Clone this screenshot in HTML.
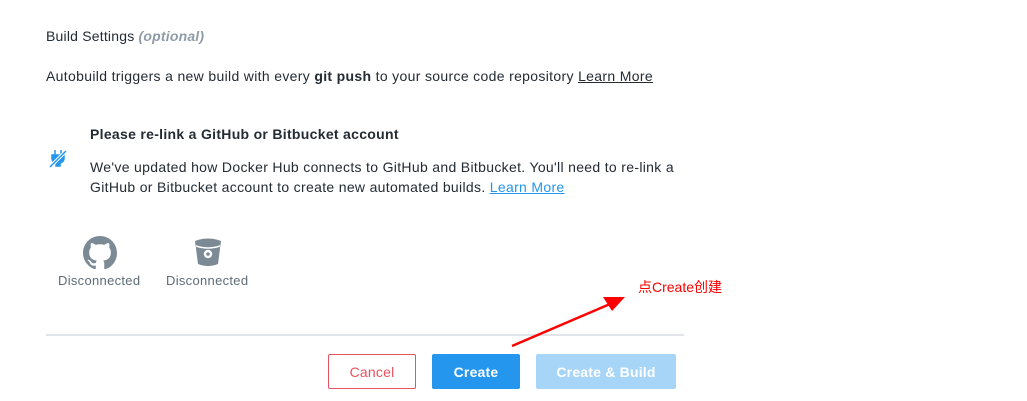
<!DOCTYPE html>
<html><head><meta charset="utf-8"><style>
body{margin:0;width:1027px;height:401px;background:#fff;font-family:"Liberation Sans","Noto Sans CJK SC",sans-serif;color:#232b33;position:relative;overflow:hidden}
.a{position:absolute;white-space:nowrap}
.t{font-size:14px}
u{text-decoration:underline}
.btn{position:absolute;top:354px;height:35px;box-sizing:border-box;font-size:14px;font-weight:bold;display:flex;align-items:center;justify-content:center;border-radius:2px;letter-spacing:0.2px}
</style></head><body>
<div class="a t" style="left:46px;top:28px;letter-spacing:0.2px">Build Settings <i style="color:#8f9ba6;font-weight:bold">(optional)</i></div>
<div class="a t" style="left:46px;top:68px;letter-spacing:0.33px">Autobuild triggers a new build with every <b>git push</b> to your source code repository <u>Learn More</u></div>
<svg class="a" style="left:49px;top:148px" width="20" height="20" viewBox="0 0 20 20"><path d="M6 2v5M12 2v5M3 7h12v4a5 5 0 0 1-4 4v3h-4v-3a5 5 0 0 1-4-4z" fill="#2496ed" stroke="#2496ed" stroke-width="1.5"/><path d="M1 19L17 3" stroke="#fff" stroke-width="3.5"/><path d="M1 19L17 3" stroke="#2496ed" stroke-width="1.5"/></svg>
<div class="a t" style="left:90px;top:126px;font-weight:bold;letter-spacing:0.3px">Please re-link a GitHub or Bitbucket account</div>
<div class="a t" style="left:90px;top:157px;line-height:20px;letter-spacing:0.32px">We've updated how Docker Hub connects to GitHub and Bitbucket. You'll need to re-link a<br>GitHub or Bitbucket account to create new automated builds. <u style="color:#2496ed">Learn More</u></div>
<svg class="a" style="left:83px;top:236px" width="34" height="34" viewBox="0 0 16 16"><path fill="#7b8a95" d="M8 0C3.58 0 0 3.58 0 8c0 3.54 2.290 6.53 5.47 7.59.4.07.55-.17.55-.38v-1.33c-2.23.48-2.7-1.07-2.7-1.07-.36-.92-.89-1.17-.89-1.17-.73-.5.06-.49.06-.49.8.06 1.23.83 1.23.83.71 1.22 1.87.87 2.33.66.07-.52.28-.87.51-1.07-1.78-.2-3.64-.89-3.64-3.95 0-.87.31-1.59.82-2.15-.08-.2-.36-1.02.08-2.12 0 0 .67-.21 2.2.82a7.6 7.6 0 0 1 4 0c1.53-1.04 2.2-.82 2.2-.82.44 1.1.16 1.92.08 2.12.51.56.82 1.27.82 2.15 0 3.07-1.87 3.75-3.65 3.95.29.25.54.73.54 1.48v2.2c0 .21.15.46.55.38A8 8 0 0 0 16 8c0-4.42-3.58-8-8-8z"/></svg>
<svg class="a" style="left:194px;top:237px" width="28" height="32" viewBox="0 0 28 32"><path d="M1 4Q14-1 27 4L24 27Q14 31 4 27z" fill="#7b8a95"/><path d="M2 9Q14 13 26 9" stroke="#fff" stroke-width="1.5" fill="none"/><circle cx="14" cy="17" r="4.2" fill="#fff"/><circle cx="14" cy="17" r="1.8" fill="#7b8a95"/></svg>
<div class="a" style="left:58px;top:273px;font-size:13px;color:#5e6c78;letter-spacing:0.3px">Disconnected</div>
<div class="a" style="left:166px;top:273px;font-size:13px;color:#5e6c78;letter-spacing:0.3px">Disconnected</div>
<div class="a" style="left:46px;top:334px;width:638px;height:2px;background:#e1e5e9"></div>
<div class="btn" style="left:328px;width:88px;border:1px solid #e6525f;color:#e6525f;font-weight:normal">Cancel</div>
<div class="btn" style="left:432px;width:88px;background:#2496ed;color:#fff">Create</div>
<div class="btn" style="left:536px;width:140px;background:#a7d5f8;color:#fff">Create &amp; Build</div>
<div class="a" style="left:638px;top:277px;font-size:14px;color:#f00">点Create创建</div>
<svg class="a" style="left:0;top:0" width="1027" height="401"><path d="M512 346L610 304" stroke="#f00" stroke-width="2.5"/><path d="M625 297L603 297L612 311z" fill="#f00"/></svg>
</body></html>
